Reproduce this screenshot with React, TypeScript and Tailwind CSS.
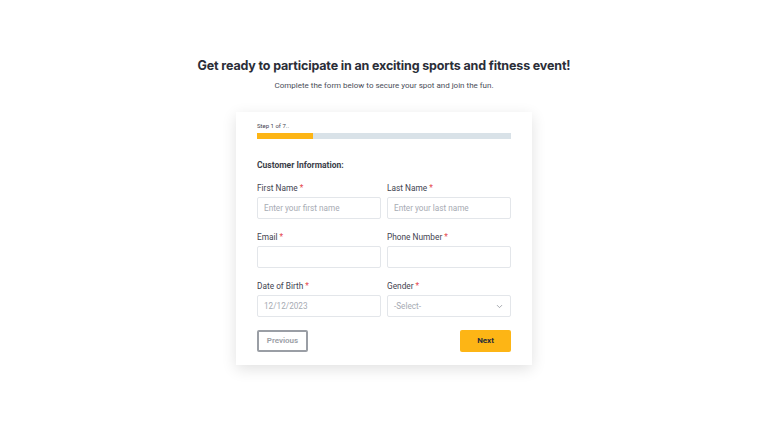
import { ChevronDown } from "lucide-react";

function Label({ text }: { text: string }) {
  return (
    <label className="mb-[3px] block text-[8.3px] leading-[12px] text-[#3f4350]">
      {text} <span className="text-[#e5484d]">*</span>
    </label>
  );
}

function Field({ label, placeholder }: { label: string; placeholder?: string }) {
  return (
    <div className="flex flex-col">
      <Label text={label} />
      <div className="flex h-[22px] items-center rounded-[2px] border border-[#e3e6ea] bg-white px-[6px] text-[8.2px] text-[#a7abb3]">
        {placeholder}
      </div>
    </div>
  );
}

export default function App() {
  return (
    <div
      className="flex h-[432px] w-[768px] flex-col items-center bg-white pt-[57px]"
      style={{ fontFamily: "Roboto, 'Liberation Sans', sans-serif" }}
    >
      <h1
        className="text-[12.5px] font-bold leading-[18px] tracking-[-0.15px] text-[#2b2e38]"
        style={{ fontFamily: "Inter, 'Liberation Sans', sans-serif" }}
      >
        Get ready to participate in an exciting sports and fitness event!
      </h1>
      <p className="mt-[5px] text-[8px] leading-[12px] text-[#4a4e58]">
        Complete the form below to secure your spot and join the fun.
      </p>

      <div className="mt-[20px] w-[296px] bg-white px-[21px] pb-[13px] pt-[10px] shadow-[0_4px_14px_rgba(0,0,0,0.12)]">
        <div className="text-[6px] leading-[8px] text-[#3f4350]">Step 1 of 7..</div>
        <div className="mt-[3px] flex h-[6px] w-full bg-[#d9e2e8]">
          <div className="h-full w-[56px] bg-[#fdb515]" />
        </div>

        <div className="mt-[20px] text-[8.5px] font-bold leading-[12px] text-[#3a3d48]">
          Customer Information:
        </div>

        <div className="mt-[11px] grid grid-cols-2 gap-x-[6px] gap-y-[12px]">
          <Field label="First Name" placeholder="Enter your first name" />
          <Field label="Last Name" placeholder="Enter your last name" />
          <Field label="Email" />
          <Field label="Phone Number" />
          <Field label="Date of Birth" placeholder="12/12/2023" />
          <div className="flex flex-col">
            <Label text="Gender" />
            <div className="flex h-[22px] items-center justify-between rounded-[2px] border border-[#e3e6ea] bg-white px-[6px] text-[8.2px] text-[#a7abb3]">
              <span>-Select-</span>
              <ChevronDown className="h-[9px] w-[9px] text-[#8a8e96]" strokeWidth={2} />
            </div>
          </div>
        </div>

        <div className="mt-[13px] flex items-center justify-between">
          <button className="flex h-[22px] w-[51px] items-center justify-center rounded-[2px] border-2 border-[#9a9ea5] bg-white text-[8px] font-semibold text-[#9a9ea5]">
            Previous
          </button>
          <button className="flex h-[22px] w-[51px] items-center justify-center rounded-[2px] bg-[#fdb515] text-[8px] font-bold text-[#2b2e38]">
            Next
          </button>
        </div>
      </div>
    </div>
  );
}
